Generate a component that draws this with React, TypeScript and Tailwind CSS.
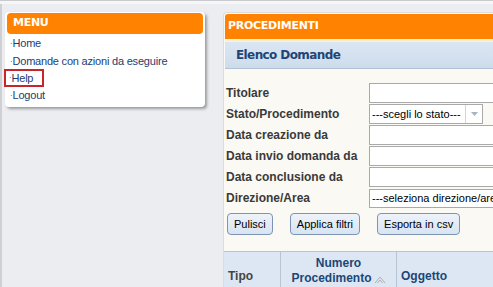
import React from 'react';

const menuItems = ['Home', 'Domande con azioni da eseguire', 'Help', 'Logout'];

const rows = [
  { label: 'Titolare', kind: 'input' },
  { label: 'Stato/Procedimento', kind: 'stato' },
  { label: 'Data creazione da', kind: 'input' },
  { label: 'Data invio domanda da', kind: 'input' },
  { label: 'Data conclusione da', kind: 'input' },
  { label: 'Direzione/Area', kind: 'area' },
];

const App: React.FC = () => {
  return (
    <div className="w-[493px] h-[287px] overflow-hidden bg-[#ecedf1] font-['Liberation_Sans',sans-serif] select-none">
      {/* top strip */}
      <div className="h-[1px] bg-[#c9cacd]" />
      <div className="h-[3px] bg-[#f6f6f7]" />

      <div className="flex h-[283px] border-l-2 border-[#cfd0d3]">
        {/* LEFT MENU */}
        <div className="w-[221px] flex-shrink-0 pt-[8px] pl-[3px]">
          <div className="w-[200px] bg-white rounded-[4px] shadow-[2px_2px_3px_rgba(0,0,0,0.35)] pb-[3px]">
            <div className="mx-[2px] pt-[1px]">
              <div className="h-[21px] bg-[#ff8300] rounded-[4px] flex items-center px-[6px]">
                <span className="text-white font-bold text-[11px] font-['DejaVu_Sans',sans-serif] tracking-tight">MENU</span>
              </div>
            </div>
            <div className="flex flex-col pt-[1px]">
              {menuItems.map((item) => (
                <div key={item} className="h-[17.3px] flex items-center">
                  <span
                    className={
                      item === 'Help'
                        ? 'h-[18px] flex items-center pl-[3px] pr-[9px] -ml-[1px] border-2 border-[#c8242c] text-[11px] tracking-[-0.2px] text-[#1c3c72]'
                        : 'pl-[5px] text-[11px] tracking-[-0.2px] text-[#1c3c72]'
                    }
                  >
                    <span className="text-[8px] align-middle">·</span>
                    {item}
                  </span>
                </div>
              ))}
            </div>
          </div>
        </div>

        {/* RIGHT PANEL */}
        <div className="flex-1 pt-[8px] min-w-[272px]">
          <div className="w-[300px] h-full bg-[#faf9f4] rounded-t-[4px] border-l border-t border-[#dcdcdc]">
            <div className="h-[28px] bg-[#ff8300] rounded-tl-[3px] border-b-[3px] border-[#fdf1d8] flex items-center pl-[3px] mt-[1px] ml-[1px]">
              <span className="text-white font-bold text-[11px] font-['DejaVu_Sans',sans-serif] tracking-tight">PROCEDIMENTI</span>
            </div>
            <div className="h-[27px] bg-gradient-to-b from-[#dbe6f3] to-[#cddcec] border-b border-[#b3c2d3] flex items-center pl-[11px] ml-[1px]">
              <span className="text-[#1c4677] font-bold text-[12px] font-['DejaVu_Sans',sans-serif] tracking-[-0.6px]">Elenco Domande</span>
            </div>

            <div className="pl-[2px] pt-[14px] flex flex-col gap-[1px]">
              {rows.map((r) => (
                <div key={r.label} className="h-[20px] flex items-center">
                  <span className="w-[143px] flex-shrink-0 whitespace-nowrap text-[12px] font-bold text-[#3a3a3a]">
                    {r.label}
                  </span>
                  {r.kind === 'input' && (
                    <div className="w-[160px] h-[20px] bg-white border border-[#a9a9a9]" />
                  )}
                  {r.kind === 'stato' && (
                    <div className="w-[114px] h-[20px] bg-white border border-[#a9a9a9] flex items-center">
                      <span className="flex-1 pl-[2px] text-[11px] text-black">---scegli lo stato---</span>
                      <div className="w-[17px] h-full border-l border-[#d4d4d4] flex items-center justify-center">
                        <svg width="7" height="4" viewBox="0 0 7 4">
                          <path d="M0 0 L7 0 L3.5 4 Z" fill="#a8b4c4" />
                        </svg>
                      </div>
                    </div>
                  )}
                  {r.kind === 'area' && (
                    <div className="w-[160px] h-[19px] bg-white border border-[#a9a9a9] flex items-center">
                      <span className="pl-[2px] text-[11px] text-black whitespace-nowrap">---seleziona direzione/area---</span>
                    </div>
                  )}
                </div>
              ))}
            </div>

            <div className="flex gap-[17px] pl-[3px] pt-[5px]">
              {['Pulisci', 'Applica filtri', 'Esporta in csv'].map((b) => (
                <button
                  key={b}
                  className="h-[22px] px-[6px] rounded-[4px] border border-[#7d94b4] bg-gradient-to-b from-[#eef3fa] to-[#d8e4f2] text-[11px] text-black"
                >
                  {b}
                </button>
              ))}
            </div>

            <div className="mt-[16px] h-[50px] flex bg-[#dde6f3] border-t border-[#b7c4d4]">
              <div className="w-[57px] border-r border-[#b7c4d4] pl-[4px] pt-[11px]">
                <span className="text-[12px] font-bold text-[#444]">Tipo</span>
              </div>
              <div className="w-[116px] border-r border-[#b7c4d4] flex flex-col items-center leading-[15px] pt-[4px]">
                <span className="text-[12px] font-bold text-[#1c4677]">Numero</span>
                <span className="text-[12px] font-bold text-[#1c4677] flex items-center">
                  Procedimento
                  <svg width="12" height="10" viewBox="0 0 12 10" className="ml-[2px]">
                    <path d="M1 9 L6 3 L11 9" fill="none" stroke="#b0b0b0" strokeWidth="1" />
                    <path d="M3.5 9 L6 6 L8.5 9" fill="none" stroke="#b0b0b0" strokeWidth="1" />
                  </svg>
                </span>
              </div>
              <div className="flex-1 pl-[4px] pt-[11px]">
                <span className="text-[12px] font-bold text-[#1c4677]">Oggetto</span>
              </div>
            </div>
          </div>
        </div>
      </div>
    </div>
  );
};

export default App;
